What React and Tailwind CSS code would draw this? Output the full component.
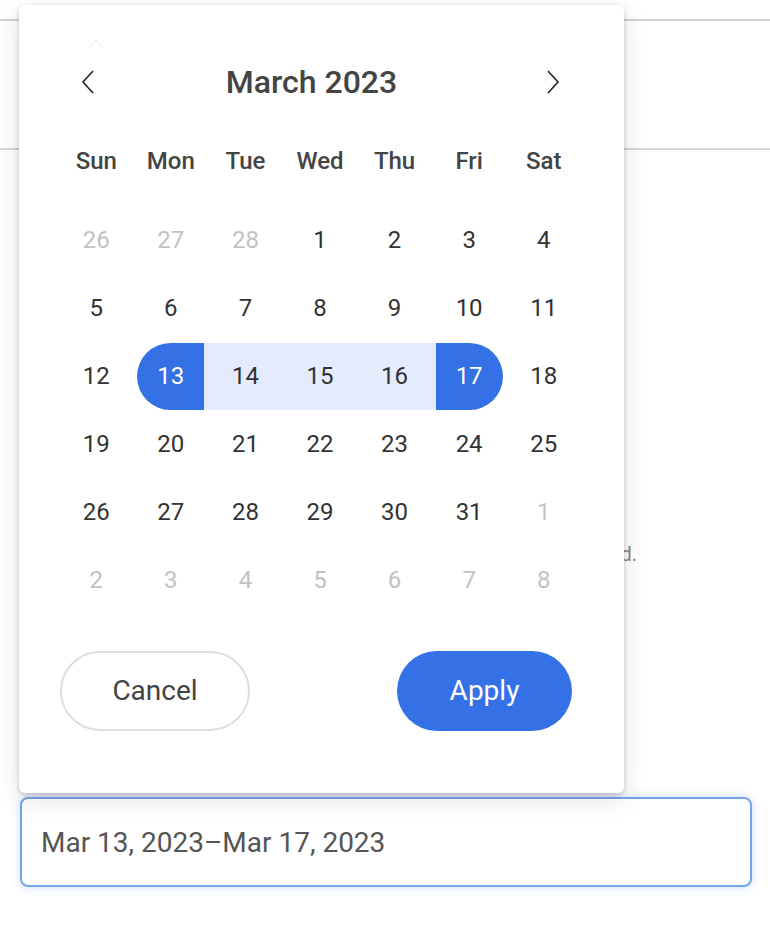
import React, { useState } from 'react';

const weekDays = ['Sun', 'Mon', 'Tue', 'Wed', 'Thu', 'Fri', 'Sat'];

const buildWeeks = () => {
    const days = [];
    [26, 27, 28].forEach((d) => days.push({ day: d, muted: true }));
    for (let d = 1; d <= 31; d++) days.push({ day: d, muted: false });
    for (let d = 1; d <= 8; d++) days.push({ day: d, muted: true });
    const weeks = [];
    for (let i = 0; i < days.length; i += 7) weeks.push(days.slice(i, i + 7));
    return weeks;
};

const Chevron = ({ dir }) => (
    <svg width="14" height="24" viewBox="0 0 14 24" fill="none">
        <path
            d={dir === 'left' ? 'M12 1 L2 12 L12 23' : 'M2 1 L12 12 L2 23'}
            stroke="#222"
            strokeWidth="1.6"
        />
    </svg>
);

const DayCell = ({ item, start, end }) => {
    const { day, muted } = item;
    const inRange = !muted && day > start && day < end;
    const isStart = !muted && day === start;
    const isEnd = !muted && day === end;

    let cellBg = '';
    if (inRange) cellBg = 'bg-[#e3ebfc]';
    if (isStart) cellBg = 'bg-[linear-gradient(to_right,transparent_50%,#e3ebfc_50%)]';
    if (isEnd) cellBg = 'bg-[linear-gradient(to_right,#e3ebfc_50%,transparent_50%)]';

    let inner = 'text-[#333]';
    if (muted) inner = 'text-[#c2c2c2]';
    if (isStart) inner = 'bg-[#3471e6] text-white rounded-l-full';
    if (isEnd) inner = 'bg-[#3471e6] text-white rounded-r-full';

    return (
        <div className={`flex h-[67px] items-center justify-center ${cellBg}`}>
            <div className={`flex h-[67px] w-[67px] items-center justify-center text-[24px] ${inner}`}>
                {day}
            </div>
        </div>
    );
};

const App = () => {
    const [range] = useState({ start: 13, end: 17 });
    const weeks = buildWeeks();

    return (
        <div className="relative h-[928px] w-full overflow-hidden bg-white font-['Roboto',sans-serif]">
            {/* page behind the popover */}
            <div className="pt-[19px]">
                <div className="h-[2px] bg-[#d3d3d3]" />
                <div className="h-[127px]" />
                <div className="h-[2px] bg-[#d6d6d6]" />
                <div className="flex w-[637px] justify-end pt-[393px] text-[20px] leading-[22px] text-[#8a8a8a]">
                    Dates outside the allowed range cannot be selected.
                </div>
                <div className="px-[20px] pt-[232px]">
                    <div className="flex h-[90px] w-[732px] items-center rounded-[8px] border-2 border-[#72a6e8] bg-white pl-[19px] pt-[2px] text-[28px] text-[#555] shadow-[0_0_10px_rgba(52,113,230,0.25)]">
                        Mar 13, 2023–Mar 17, 2023
                    </div>
                </div>
            </div>

            {/* popover */}
            <div className="absolute left-[19px] top-[5px] h-[788px] w-[605px] rounded-[6px] bg-white px-[40px] shadow-[0_2px_5px_rgba(0,0,0,0.18),0_6px_26px_rgba(0,0,0,0.12)]">
                <div className="flex h-[44px] items-end pb-[1px] pl-[29px]">
                    <svg width="16" height="8" viewBox="0 0 16 8" fill="none">
                        <path d="M1 7.5 L8 1 L15 7.5" stroke="#e2e2e2" strokeWidth="1" />
                    </svg>
                </div>
                <div className="mt-[5px] flex h-[56px] items-center pl-[22px] pr-[24px]">
                    <button className="flex w-[14px] items-center justify-center">
                        <Chevron dir="left" />
                    </button>
                    <div className="flex-1 pr-[18px] text-center text-[32px] font-medium text-[#444]">
                        March 2023
                    </div>
                    <button className="flex w-[14px] items-center justify-center">
                        <Chevron dir="right" />
                    </button>
                </div>
                <div className="mt-[17px] grid h-[68px] w-[522px] grid-cols-7 items-center">
                    {weekDays.map((d) => (
                        <div key={d} className="text-center text-[24px] font-medium text-[#444]">
                            {d}
                        </div>
                    ))}
                </div>
                <div className="mt-[11px] flex w-[522px] flex-col">
                    {weeks.map((week, wi) => (
                        <div key={wi} className="grid h-[68px] grid-cols-7 items-center">
                            {week.map((item, di) => (
                                <DayCell key={di} item={item} start={range.start} end={range.end} />
                            ))}
                        </div>
                    ))}
                </div>
                <div className="mt-[37px] flex w-[522px] items-center justify-between pl-[1px] pr-[9px]">
                    <button className="flex h-[80px] w-[190px] items-center justify-center rounded-full border-2 border-[#dedede] text-[28px] text-[#444]">
                        Cancel
                    </button>
                    <button className="flex h-[80px] w-[175px] items-center justify-center rounded-full bg-[#3471e6] text-[28px] text-white">
                        Apply
                    </button>
                </div>
            </div>
        </div>
    );
};

export default App;
